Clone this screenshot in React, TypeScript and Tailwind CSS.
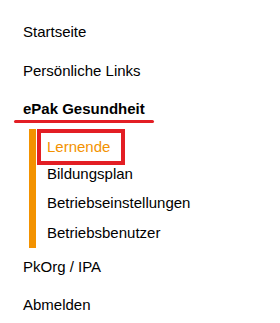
const topItem = 'block h-[18px] leading-[18px] text-[15px] text-black';

const subItems = ['Lernende', 'Bildungsplan', 'Betriebseinstellungen', 'Betriebsbenutzer'];

export default function App() {
  return (
    <nav
      className="h-[323px] w-[280px] bg-white pt-[23px]"
      style={{ fontFamily: '"Liberation Sans", Arial, sans-serif' }}
    >
      <ul className="pl-[23px]">
        <li className="mb-[21px]">
          <a className={topItem}>Startseite</a>
        </li>
        <li className="mb-[20px]">
          <a className={topItem}>Persönliche Links</a>
        </li>
        <li>
          <a className={`${topItem} font-bold`}>ePak Gesundheit</a>
          <div className="ml-[-9px] mt-[2px] h-[3px] w-[140px] rounded-full bg-[#e31e24]" />
          <ul className="ml-[6px] mt-[6px] border-l-[7px] border-[#f39200] pl-[11px] pt-[6px] pb-[6.5px]">
            {subItems.map((label, i) => (
              <li key={label} className={i < subItems.length - 1 ? 'h-[29.5px]' : 'h-[18px]'}>
                {i === 0 ? (
                  <a className="-my-[5px] -ml-[6px] inline-block py-[5px] pl-[6px] pr-[11px] text-[15px] leading-[18px] text-[#f39200] outline-4 outline-[#e31e24]">
                    {label}
                  </a>
                ) : (
                  <a className="block text-[15px] leading-[18px] text-black">{label}</a>
                )}
              </li>
            ))}
          </ul>
        </li>
        <li className="mt-[9.5px] mb-[20.5px]">
          <a className={topItem}>PkOrg / IPA</a>
        </li>
        <li>
          <a className={topItem}>Abmelden</a>
        </li>
      </ul>
    </nav>
  );
}
